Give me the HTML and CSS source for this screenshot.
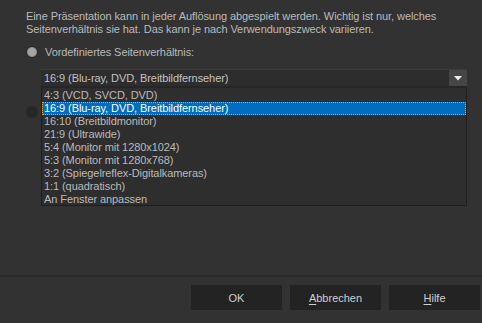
FILE: index.html
```html
<!DOCTYPE html>
<html lang="de">
<head>
<meta charset="utf-8">
<link rel="stylesheet" href="styles.css">
</head>
<body>
<div class="dialog">
  <div class="main">
    <p class="desc">Eine Präsentation kann in jeder Auflösung abgespielt werden. Wichtig ist nur, welches<br>Seitenverhältnis sie hat. Das kann je nach Verwendungszweck variieren.</p>
    <div class="option">
      <span class="radio radio-on"></span>
      <span class="label">Vordefiniertes Seitenverhältnis:</span>
    </div>
    <div class="combo">
      <span class="combo-text">16:9 (Blu-ray, DVD, Breitbildfernseher)</span>
      <span class="combo-btn"><svg width="8" height="5" viewBox="0 0 8 5"><path d="M0 0H8L4 4.5Z" fill="#f0f0f0"/></svg></span>
    </div>
    <div class="option option-2">
      <span class="radio radio-off"></span>
    </div>
    <ul class="list">
      <li>4:3 (VCD, SVCD, DVD)</li>
      <li class="sel">16:9 (Blu-ray, DVD, Breitbildfernseher)</li>
      <li>16:10 (Breitbildmonitor)</li>
      <li>21:9 (Ultrawide)</li>
      <li>5:4 (Monitor mit 1280x1024)</li>
      <li>5:3 (Monitor mit 1280x768)</li>
      <li>3:2 (Spiegelreflex-Digitalkameras)</li>
      <li>1:1 (quadratisch)</li>
      <li>An Fenster anpassen</li>
    </ul>
  </div>
  <div class="footer">
    <button class="btn">OK</button>
    <button class="btn"><u>A</u>bbrechen</button>
    <button class="btn"><u>H</u>ilfe</button>
  </div>
</div>
</body>
</html>
```
FILE: styles.css
```css
html, body {
  margin: 0;
  padding: 0;
  background: #323232;
}
.dialog {
  width: 482px;
  height: 323px;
  display: flex;
  flex-direction: column;
  background: #323232;
  color: #bababa;
  font-family: "Liberation Sans", Arial, sans-serif;
  font-size: 11px;
  letter-spacing: -0.08px;
  overflow: hidden;
}
.main {
  position: relative;
  height: 275px;
  padding: 10px 0 0 26px;
  box-sizing: border-box;
}
.desc {
  margin: 0;
  line-height: 13px;
  white-space: nowrap;
}
.option {
  display: flex;
  align-items: center;
  gap: 7px;
  height: 14px;
  margin-top: 9px;
  margin-left: 0;
}
.radio {
  width: 12px;
  height: 12px;
  border-radius: 50%;
  box-sizing: border-box;
  flex: none;
}
.radio-on {
  background: radial-gradient(circle, #a4a4a4 0 3.5px, #8c8c8c 4.5px, #262626 5.5px);
}
.radio-off {
  background: #272727;
}
.combo {
  display: flex;
  align-items: stretch;
  margin: 10px 15px 0 15px;
  height: 18px;
  background: #2d2d2d;
  border-top: 1px solid #3b3b3b;
  border-bottom: 1px solid #262626;
  box-sizing: border-box;
}
.combo-text {
  flex: 1;
  padding-left: 3px;
  line-height: 16px;
  color: #c2c2c2;
}
.combo-btn {
  width: 18px;
  background: #464646;
  display: flex;
  align-items: center;
  justify-content: center;
}
.option-2 {
  margin-top: 18px;
}
.list {
  position: absolute;
  left: 41px;
  top: 87px;
  width: 426px;
  height: 119px;
  margin: 0;
  padding: 1px 0 0 0;
  list-style: none;
  background: #2e2e2e;
  border: 1px solid #1e1e1e;
  border-top-color: #262626;
  box-sizing: border-box;
}
.list li {
  height: 13px;
  line-height: 13px;
  padding-left: 2px;
  box-sizing: border-box;
  white-space: nowrap;
}
.list li.sel {
  background: #006cbd;
  color: #ffffff;
  outline: 1px dotted #f0a030;
  outline-offset: -1px;
}
.footer {
  flex: 1;
  display: flex;
  justify-content: flex-end;
  align-items: flex-start;
  gap: 8px;
  padding: 8px 2px 0 0;
  border-top: 2px solid #2a2a2a;
}
.btn {
  width: 91px;
  height: 25px;
  background: #232323;
  color: #cfcfcf;
  border: none;
  font: inherit;
  padding: 0;
}
.btn u {
  text-decoration-thickness: 1px;
  text-underline-offset: 2px;
}
```
